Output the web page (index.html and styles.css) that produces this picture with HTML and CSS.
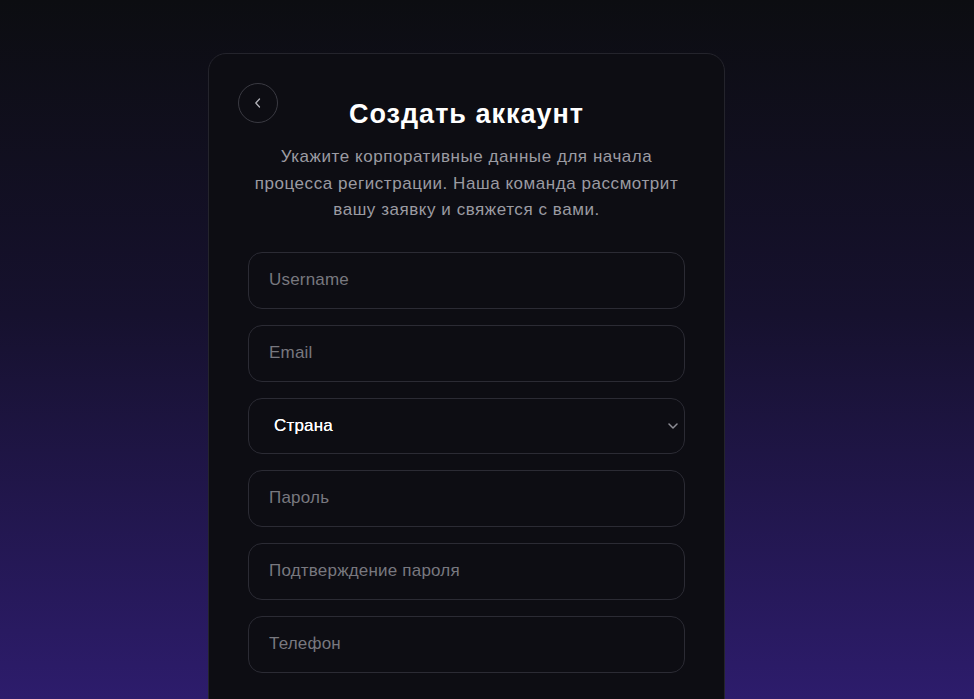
FILE: index.html
```html
<!DOCTYPE html>
<html lang="ru">
<head>
<meta charset="utf-8">
<title>Создать аккаунт</title>
<link rel="stylesheet" href="styles.css">
</head>
<body>
<div class="page">
  <div class="card">
    <button class="back" type="button" aria-label="Назад">
      <svg width="12" height="12" viewBox="0 0 12 12" fill="none"><path d="M7.5 2 L3.8 6 L7.5 10" stroke="#b4b4bb" stroke-width="1.3" stroke-linecap="round" stroke-linejoin="round"/></svg>
    </button>
    <h1 class="title">Создать аккаунт</h1>
    <p class="subtitle">Укажите корпоративные данные для начала процесса регистрации. Наша команда рассмотрит вашу заявку и свяжется с вами.</p>
    <form class="form">
      <input class="field" type="text" placeholder="Username">
      <input class="field" type="email" placeholder="Email">
      <div class="select-wrap">
        <select class="field select">
          <option>Страна</option>
        </select>
        <svg class="chev" width="10" height="6" viewBox="0 0 10 6" fill="none"><path d="M1 1 L5 5 L9 1" stroke="#8d8d95" stroke-width="1.5" stroke-linecap="round" stroke-linejoin="round"/></svg>
      </div>
      <input class="field" type="password" placeholder="Пароль">
      <input class="field" type="password" placeholder="Подтверждение пароля">
      <input class="field" type="tel" placeholder="Телефон">
    </form>
  </div>
</div>
</body>
</html>
```
FILE: styles.css
```css
html, body {
  margin: 0;
  padding: 0;
}
body {
  font-family: "Liberation Sans", Arial, sans-serif;
  background: #0c0d11;
}
.page {
  height: 100vh;
  overflow: hidden;
  box-sizing: border-box;
  padding-top: 53px;
  padding-left: 208px;
  background: linear-gradient(180deg, #0c0d11 0%, #16112e 45%, #2d1c6c 100%);
  display: flex;
  justify-content: flex-start;
}
.card {
  position: relative;
  width: 517px;
  box-sizing: border-box;
  padding: 44px 39px 40px;
  background: #0d0d13;
  border: 1px solid #24242c;
  border-radius: 18px;
  flex-shrink: 0;
  height: 760px;
}
.back {
  position: absolute;
  top: 29px;
  left: 29px;
  width: 40px;
  height: 40px;
  border-radius: 50%;
  border: 1px solid #3a3a42;
  background: transparent;
  display: flex;
  align-items: center;
  justify-content: center;
  padding: 0;
  cursor: pointer;
}
.title {
  margin: 0;
  text-align: center;
  color: #ffffff;
  font-size: 27px;
  line-height: 32px;
  font-weight: 700;
  letter-spacing: 1px;
}
.subtitle {
  margin: 14px auto 0;
  max-width: 430px;
  text-align: center;
  color: #9b9ba2;
  font-size: 17px;
  line-height: 26.5px;
  font-weight: 400;
  letter-spacing: 0.55px;
}
.form {
  margin-top: 28px;
  display: flex;
  flex-direction: column;
  gap: 16px;
}
.field {
  display: block;
  width: 100%;
  box-sizing: border-box;
  height: 57px;
  padding: 0 20px;
  background: #0d0d13;
  border: 1px solid #2b2b34;
  border-radius: 14px;
  color: #ffffff;
  font-family: inherit;
  font-size: 17px;
  letter-spacing: 0.2px;
  outline: none;
}
.field::placeholder {
  color: #78787f;
}
.select-wrap {
  position: relative;
}
.select {
  appearance: none;
  -webkit-appearance: none;
  padding-left: 25px;
  height: 56px;
  text-shadow: 0 0 0.4px #ffffff;
}
.chev {
  position: absolute;
  right: 7px;
  top: 25px;
  pointer-events: none;
}
```
